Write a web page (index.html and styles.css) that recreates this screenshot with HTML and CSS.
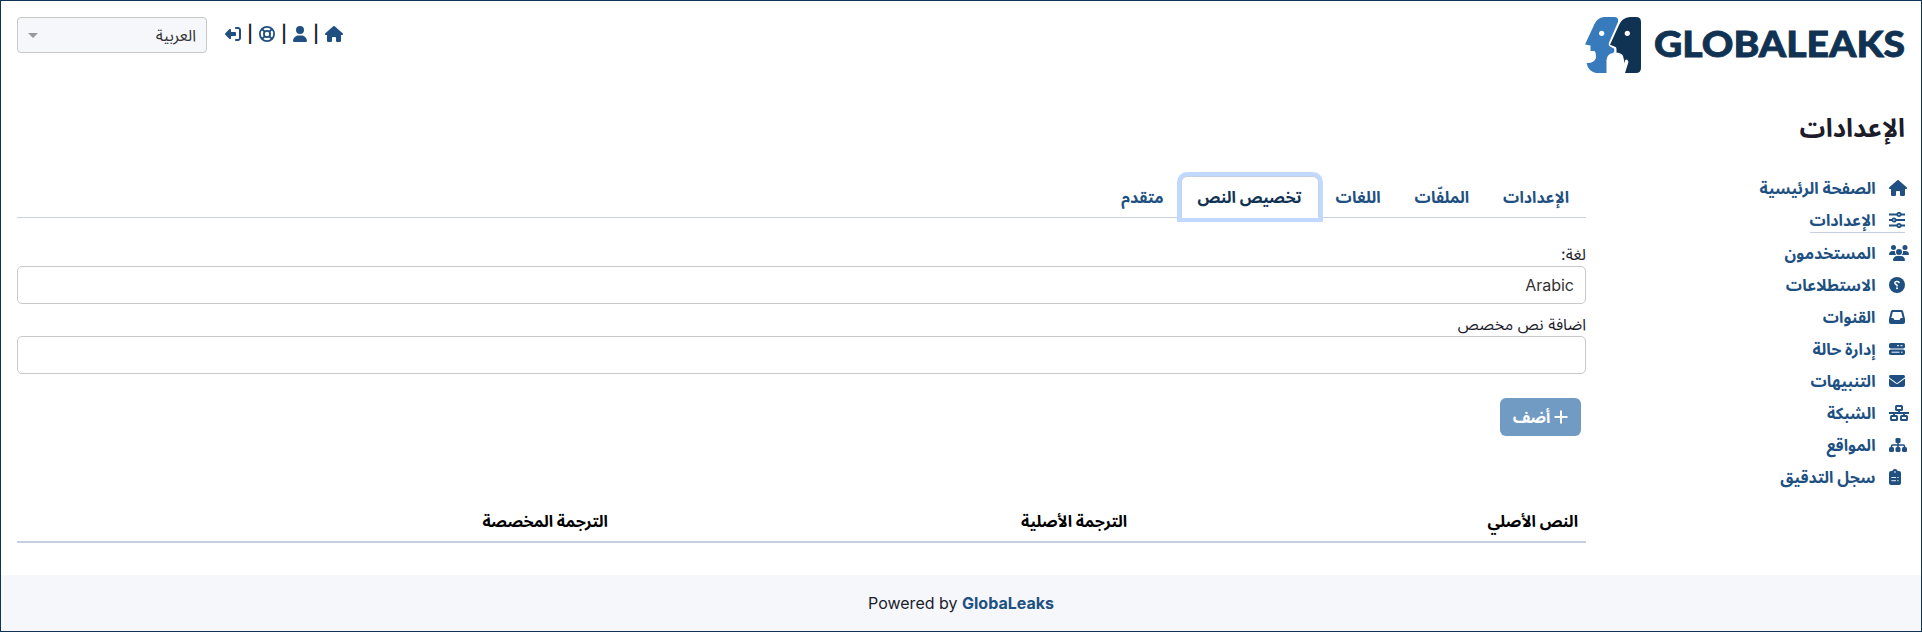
FILE: index.html
```html
<!DOCTYPE html>
<html lang="ar" dir="rtl">
<head>
<meta charset="utf-8">
<title>GlobaLeaks</title>
<link rel="stylesheet" href="styles.css">
</head>
<body>
<svg class="sprite" aria-hidden="true">
  <symbol id="house" viewBox="0 0 576 512"><path d="M575.8 255.5c0 18-15 32.1-32 32.1l-32 0 .7 160.2c0 2.7-.2 5.4-.5 8.1l0 16.2c0 22.1-17.9 40-40 40l-16 0c-1.1 0-2.2 0-3.3-.1c-1.4 .1-2.8 .1-4.2 .1L416 512l-24 0c-22.1 0-40-17.9-40-40l0-24 0-64c0-17.7-14.3-32-32-32l-64 0c-17.7 0-32 14.3-32 32l0 64 0 24c0 22.1-17.9 40-40 40l-24 0-31.9 0c-1.5 0-3-.1-4.5-.2c-1.2 .1-2.4 .2-3.6 .2l-16 0c-22.1 0-40-17.9-40-40l0-112c0-.9 0-1.9 .1-2.8l0-69.7-32 0c-18 0-32-14-32-32.1c0-9 3-17 10-24L266.4 8c7-7 15-8 22-8s15 2 21 7L564.8 231.500c8 7 12 15 11 24z"/></symbol>
</svg>
<header class="header">
  <svg class="logo" viewBox="0 0 320 56" direction="ltr" role="img">
    <path fill="#377bbc" d="M19 0H29Q34 0 33 5L24 25.500Q23 29 26 30L29 31.500Q30 35 28 36Q22 37 21.500 43V56H11Q3 54 1.600 46Q9 46.500 11 41Q11 35 9.500 34L5.500 34V28.500L0 27.500L9.500 7Q12 1 19 0Z"/>
    <path fill="#103253" d="M45 0H51Q56 0 56 5V51Q56 56 51 56H40L43.500 45Q42 41 40 43.500L39.300 46.500Q39 39 36.500 37L34 36L31.500 35.500V32Q31.500 29.500 29.500 29.500L25 27.700L34.500 7Q37 1 45 0Z"/>
    <circle cx="16.700" cy="16.300" r="2.600" fill="#fff"/><circle cx="42.300" cy="16.300" r="2.600" fill="#fff"/>
    <text class="wordmark" x="69" y="40.300" textLength="251" lengthAdjust="spacingAndGlyphs">GLOBALEAKS</text>
  </svg>
  <div class="tools">
    <nav class="quick">
      <svg class="icon w18"><use href="#house"/></svg><span class="bar">|</span>
      <svg class="icon w14" viewBox="0 0 448 512"><path d="M224 256A128 128 0 1 0 224 0a128 128 0 1 0 0 256zm-45.700 48C79.800 304 0 383.800 0 482.300C0 498.700 13.300 512 29.700 512l388.600 0c16.400 0 29.700-13.300 29.700-29.700C448 383.800 368.200 304 269.700 304l-91.400 0z"/></svg><span class="bar">|</span>
      <svg class="icon line" viewBox="0 0 16 16"><circle cx="8" cy="8" r="7.100"/><circle cx="8" cy="8" r="3.100"/><path d="M3 3l2.900 2.900M13 3l-2.900 2.900M3 13l2.900-2.900M13 13l-2.900-2.900"/></svg><span class="bar">|</span>
      <svg class="icon flip" viewBox="0 0 512 512"><path d="M377.900 105.900L500.700 228.700c7.200 7.200 11.300 17.100 11.300 27.300s-4.100 20.100-11.300 27.300L377.900 406.100c-6.400 6.400-15 9.900-24 9.900c-18.700 0-33.900-15.200-33.900-33.900l0-62.100-128 0c-17.700 0-32-14.300-32-32l0-64c0-17.700 14.300-32 32-32l128 0 0-62.100c0-18.700 15.200-33.900 33.900-33.900c9 0 17.600 3.600 24 9.900zM160 96L96 96c-17.700 0-32 14.300-32 32l0 256c0 17.700 14.300 32 32 32l64 0c17.700 0 32 14.300 32 32s-14.300 32-32 32l-64 0c-53 0-96-43-96-96L0 128C0 75 43 32 96 32l64 0c17.700 0 32 14.300 32 32s-14.300 32-32 32z"/></svg>
    </nav>
    <div class="language"><span>العربية</span><i class="caret"></i></div>
  </div>
</header>
<h1 class="title">الإعدادات</h1>
<div class="layout">
  <nav class="sidebar">
    <a class="item"><span class="glyph"><svg class="icon w18"><use href="#house"/></svg></span>الصفحة الرئيسية</a>
    <a class="item active"><span class="glyph"><svg class="icon line" viewBox="0 0 16 16"><path d="M0 2.500h8.300M11.700 2.500H16M0 8h3.300M6.700 8H16M0 13.500h8.300M11.700 13.500H16"/><circle cx="10" cy="2.500" r="1.700"/><circle cx="5" cy="8" r="1.700"/><circle cx="10" cy="13.500" r="1.700"/></svg></span>الإعدادات</a>
    <a class="item"><span class="glyph"><svg class="icon w20" viewBox="0 0 640 512"><path d="M144 0a80 80 0 1 1 0 160A80 80 0 1 1 144 0zM512 0a80 80 0 1 1 0 160A80 80 0 1 1 512 0zM0 298.700C0 239.800 47.800 192 106.700 192h42.700c15.900 0 31 3.500 44.600 9.700c-1.300 7.200-1.900 14.700-1.900 22.300c0 38.200 16.800 72.500 43.300 96H21.300C9.600 320 0 310.400 0 298.700zM405.300 320h-.7c26.600-23.500 43.300-57.800 43.300-96c0-7.600-.7-15-1.900-22.300c13.600-6.300 28.700-9.700 44.600-9.700h42.700C592.200 192 640 239.800 640 298.700c0 11.800-9.600 21.300-21.300 21.300zM224 224a96 96 0 1 1 192 0 96 96 0 1 1-192 0zM128 485.300C128 411.700 187.700 352 261.300 352h117.400C452.300 352 512 411.700 512 485.300c0 14.700-11.900 26.700-26.700 26.700H154.700c-14.700 0-26.700-11.900-26.700-26.700z"/></svg></span>المستخدمون</a>
    <a class="item"><span class="glyph"><svg class="icon flip" viewBox="0 0 16 16"><circle cx="8" cy="8" r="8"/><path fill="none" stroke="#fff" stroke-width="1.500" stroke-linecap="round" d="M5.900 5.600Q6.200 4.600 7.300 4.600H8.700Q10.200 4.800 10.200 6.100Q10 7 9 7.500L8 8.200V8.900"/><circle cx="8" cy="11.200" r="1" fill="#fff"/></svg></span>الاستطلاعات</a>
    <a class="item"><span class="glyph"><svg class="icon" viewBox="0 0 512 512"><path d="M121 32C91.600 32 66 52 58.900 80.500L1.900 308.400C.6 313.500 0 318.700 0 323.900V416c0 35.300 28.700 64 64 64h384c35.300 0 64-28.700 64-64v-92.100c0-5.200-.6-10.400-1.900-15.500l-57-227.900C446 52 420.400 32 391 32zm0 64h270l48 192h-51.200c-12.100 0-23.200 6.800-28.600 17.700l-14.300 28.600c-5.400 10.800-16.500 17.700-28.600 17.700H195.800c-12.100 0-23.200-6.800-28.600-17.700l-14.300-28.600c-5.400-10.800-16.500-17.700-28.600-17.700H73z"/></svg></span>القنوات</a>
    <a class="item"><span class="glyph"><svg class="icon" viewBox="0 0 16 16"><rect y="2" width="16" height="5.500" rx="1.800"/><rect y="8.500" width="16" height="5.500" rx="1.800"/><path stroke="#fff" stroke-width="1" d="M8 4.700h2M11.500 4.700h2M2.500 11.200h8M12 11.200h1.500"/></svg></span>إدارة حالة</a>
    <a class="item"><span class="glyph"><svg class="icon" viewBox="0 0 512 512"><path d="M48 64C21.500 64 0 85.500 0 112c0 15.100 7.100 29.300 19.200 38.400L236.800 313.600c11.400 8.500 27 8.500 38.400 0L492.800 150.400c12.100-9.100 19.200-23.300 19.200-38.400c0-26.500-21.500-48-48-48L48 64zM0 176L0 384c0 35.300 28.700 64 64 64l384 0c35.300 0 64-28.700 64-64l0-208L294.400 339.200c-22.800 17.100-54 17.100-76.800 0L0 176z"/></svg></span>التنبيهات</a>
    <a class="item"><span class="glyph"><svg class="icon w20 line2" viewBox="0 0 20 16"><path d="M0 8h20M10 5v3M5 8v3M15 8v3"/><rect x="7" y="1" width="6" height="4" rx=".6"/><rect x="2" y="11" width="6" height="4" rx=".6"/><rect x="12" y="11" width="6" height="4" rx=".6"/></svg></span>الشبكة</a>
    <a class="item"><span class="glyph"><svg class="icon w18" viewBox="0 0 18 16"><rect x="6.500" y="1" width="5" height="5" rx="1.300"/><rect y="10" width="5" height="5" rx="1.500"/><rect x="6.500" y="10" width="5" height="5" rx="1.500"/><rect x="13" y="10" width="5" height="5" rx="1.500"/><path fill="none" stroke="#205081" stroke-width="1.500" d="M9 5v6M2.500 11V9.300Q2.500 8 3.800 8H14.200Q15.500 8 15.500 9.300V11"/></svg></span>المواقع</a>
    <a class="item"><span class="glyph"><svg class="icon w12" viewBox="0 0 12 16"><path d="M6 0Q8 0 8.800 2H10Q12 2 12 4V14Q12 16 10 16H2Q0 16 0 14V4Q0 2 2 2H3.200Q4 0 6 0Z"/><path stroke="#fff" stroke-width=".9" d="M2.300 8.500h4.700M2.300 11.700h4.700M8.300 8.500h1.300M8.300 11.700h1.300"/><circle cx="6" cy="3" r=".8" fill="#fff"/></svg></span>سجل التدقيق</a>
  </nav>
  <main class="content">
    <div class="tabs">
      <a class="tab">الإعدادات</a><a class="tab">الملفّات</a><a class="tab">اللغات</a><a class="tab current">تخصيص النص</a><a class="tab">متقدم</a>
    </div>
    <label class="label">لغة:</label>
    <div class="field">Arabic</div>
    <label class="label second">اضافة نص مخصص</label>
    <div class="field"></div>
    <button class="add"><svg class="plus" viewBox="0 0 14 14"><path d="M7 .5v13M.5 7h13"/></svg><span>أضف</span></button>
    <div class="thead"><span>النص الأصلي</span><span>الترجمة الأصلية</span><span>الترجمة المخصصة</span></div>
  </main>
</div>
<footer class="footer" dir="ltr"><span>Powered by <a class="brand">GlobaLeaks</a></span></footer>
</body>
</html>
```
FILE: styles.css
```css
* { box-sizing: border-box; }
body {
  margin: 0;
  height: 632px;
  overflow: hidden;
  display: flex;
  flex-direction: column;
  border: 1px solid #103253;
  background: #fff;
  color: #1c1c2b;
  font: 16px/24px Inter, "Noto Sans Arabic", "Noto Sans", sans-serif;
}
.sprite { display: none; }
.header { display: flex; justify-content: space-between; align-items: flex-start; padding: 16px 16px 0; height: 104px; flex: none; }
.logo { width: 320px; height: 56px; overflow: visible; }
.wordmark { font: 900 36px Lato, sans-serif; fill: #103253; stroke: #103253; stroke-width: .8; }
.tools { display: flex; gap: 18px; }
.quick { display: flex; align-items: center; height: 34px; gap: 7px; }
.bar { width: 4px; display: flex; justify-content: center; font-weight: 600; font-size: 17px; line-height: 20px; }
.icon { width: 16px; height: 16px; fill: #205081; flex: none; display: block; }
.w12 { width: 12px; }
.w14 { width: 14px; }
.w18 { width: 18px; }
.w20 { width: 20px; }
.flip { transform: scaleX(-1); }
.line { fill: none; stroke: #205081; stroke-width: 1.8; }
.line2 { fill: none; stroke: #205081; stroke-width: 1.9; }
.language { display: flex; align-items: center; justify-content: space-between; width: 190px; height: 36px; padding: 0 10px; border: 1px solid #c8c8c8; border-radius: 4px; background: #f5f7fb; color: #333; }
.caret { border: 5px solid transparent; border-top-color: #999; border-bottom: 0; }
.title { margin: 0; padding: 0 16px; height: 71px; flex: none; font-size: 25.6px; line-height: 46px; font-weight: 700; }
.layout { display: flex; flex: none; gap: 16px; padding: 0 16px; height: 399px; }
.sidebar { width: 303px; flex: none; display: flex; flex-direction: column; align-items: flex-start; }
.item { display: flex; align-items: center; height: 32px; gap: 13.5px; color: #205081; font-weight: 700; padding-bottom: 8px; }
.item.active { height: 25px; margin-bottom: 8px; padding: 0; border-bottom: 1px solid #c5d0e0; }
.glyph { width: 16px; direction: ltr; display: flex; }
.content { flex: 1; display: flex; flex-direction: column; align-items: stretch; }
.tabs { display: flex; height: 42px; border-bottom: 1px solid #c5d0e0; }
.tab { height: 42px; padding: 8px 16px; border: 1px solid transparent; color: #205081; font-weight: 700; }
.current { background: #fff; color: #103253; border-color: #c5d0e0 #c5d0e0 #fff; border-radius: 6px 6px 0 0; box-shadow: 0 0 0 4px #c2d9ff; }
.label { margin-top: 24px; height: 24px; }
.label.second { margin-top: 8px; }
.field { height: 38px; padding: 6px 11px; border: 1px solid #c8c8c8; border-radius: 5px; color: #333; }
.add { display: flex; align-items: center; justify-content: center; gap: 4px; width: 81px; height: 38px; margin: 24px 5px 0; padding: 0; border: 0; border-radius: 6px; background: #719bc2; color: #fff; font: inherit; font-weight: 700; }
.plus { width: 14px; height: 14px; stroke: #fff; stroke-width: 2; }
.thead { display: grid; grid-template-columns: 451px 519px 1fr; height: 42px; margin-top: 65px; border-bottom: 2px solid #c5d0e0; color: #000; font-weight: 700; }
.thead span { padding: 8px; }
.footer { flex: 1; background: #f5f7fb; display: flex; align-items: center; justify-content: center; }
.brand { color: #205081; font-weight: 700; }
```
